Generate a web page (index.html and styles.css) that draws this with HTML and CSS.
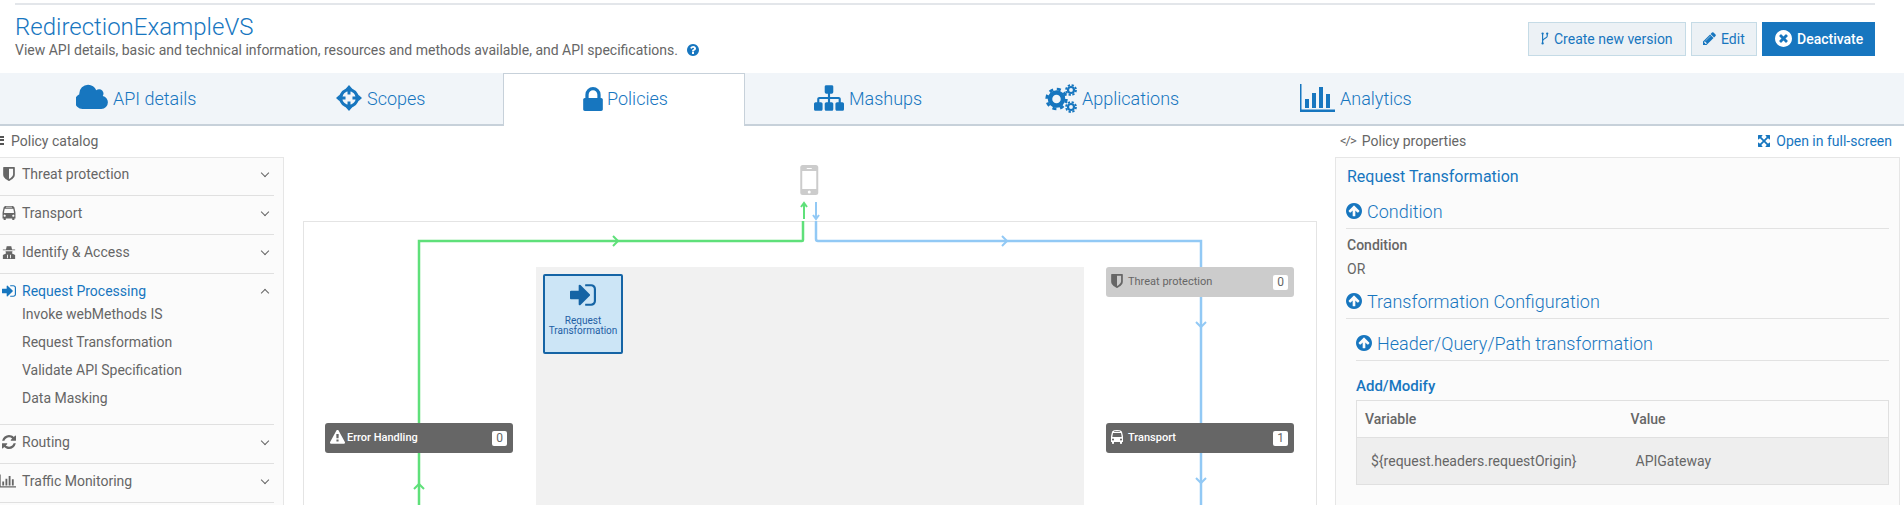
FILE: index.html
```html
<!DOCTYPE html>
<html lang="en">
<head>
<meta charset="utf-8">
<title>RedirectionExampleVS</title>
<link rel="stylesheet" href="styles.css">
</head>
<body>
<svg class="defs" width="0" height="0" aria-hidden="true">
  <symbol id="i-cloud" viewBox="0 0 1920 1792"><path d="M1856 1120q0 159-112.5 271.5t-271.5 112.5h-1088q-185 0-316.5-131.5t-131.5-316.5q0-132 71-241.5t187-163.5q-2-28-2-43 0-212 150-362t362-150q158 0 286.5 88t187.5 230q70-62 166-62 106 0 181 75t75 181q0 75-41 138 129 30 213 134.5t84 238.5z"/></symbol>
  <symbol id="i-lock" viewBox="256 128 1280 1408"><path d="M640 768h512v-192q0-106-75-181t-181-75-181 75-75 181v192zm832 96v576q0 40-28 68t-68 28h-960q-40 0-68-28t-28-68v-576q0-40 28-68t68-28h32v-192q0-184 132-316t316-132 316 132 132 316v192h32q40 0 68 28t28 68z"/></symbol>
  <symbol id="i-sitemap" viewBox="0 128 1792 1536"><path d="M1792 1248v320q0 40-28 68t-68 28h-320q-40 0-68-28t-28-68v-320q0-40 28-68t68-28h96v-192h-512v192h96q40 0 68 28t28 68v320q0 40-28 68t-68 28h-320q-40 0-68-28t-28-68v-320q0-40 28-68t68-28h96v-192h-512v192h96q40 0 68 28t28 68v320q0 40-28 68t-68 28h-320q-40 0-68-28t-28-68v-320q0-40 28-68t68-28h96v-192q0-52 38-90t90-38h512v-192h-96q-40 0-68-28t-28-68v-320q0-40 28-68t68-28h320q40 0 68 28t28 68v320q0 40-28 68t-68 28h-96v192h512q52 0 90 38t38 90v192h96q40 0 68 28t28 68z"/></symbol>
  <symbol id="i-signin" viewBox="0 128 1536 1536"><path d="M1184 896q0 26-19 45l-544 544q-19 19-45 19t-45-19-19-45v-288h-448q-26 0-45-19t-19-45v-384q0-26 19-45t45-19h448v-288q0-26 19-45t45-19 45 19l544 544q19 19 19 45zm352-352v704q0 119-84.5 203.5t-203.5 84.5h-320q-13 0-22.5-9.5t-9.5-22.5q0-4-1-20t-.5-26.5 3-23.5 10-19.5 20.5-6.5h320q66 0 113-47t47-113v-704q0-66-47-113t-113-47h-312l-11.5-1-11.5-3-8-5.5-7-9-2-13.5q0-4-1-20t-.5-26.5 3-23.5 10-19.5 20.5-6.5h320q119 0 203.5 84.5t84.5 203.5z"/></symbol>
  <symbol id="i-warning" viewBox="0 64 1792 1600"><path d="M1024 1375v-190q0-14-9.5-23.5t-22.5-9.5h-192q-13 0-22.5 9.5t-9.5 23.5v190q0 14 9.5 23.5t22.5 9.5h192q13 0 22.5-9.5t9.5-23.5zm-2-374l18-459q0-12-10-19-13-11-24-11h-220q-11 0-24 11-10 7-10 21l17 457q0 10 10 16.5t24 6.5h185q14 0 23.5-6.5t10.5-16.5zm-14-934l768 1408q35 63-2 126-17 29-46.5 46t-63.5 17h-1536q-34 0-63.5-17t-46.5-46q-37-63-2-126l768-1408q17-31 47-49t65-18 65 18 47 49z"/></symbol>
  <symbol id="i-shield" viewBox="256 128 1280 1536"><path d="M1344 960v-640h-448v1137q119-63 213-137 235-184 235-360zm192-768v768q0 86-33.5 170.5t-83 150-118 127.5-126.5 103-121 77.5-89.5 49.5-42.5 20q-12 6-26 6t-26-6q-16-7-42.5-20t-89.5-49.5-121-77.5-126.5-103-118-127.5-83-150-33.5-170.5v-768q0-26 19-45t45-19h1152q26 0 45 19t19 45z"/></symbol>
  <symbol id="i-bus" viewBox="128 64 1536 1664"><path d="M512 1216q0-53-37.5-90.5t-90.5-37.5-90.5 37.5-37.5 90.5 37.5 90.5 90.5 37.5 90.5-37.5 37.5-90.5zm1024 0q0-53-37.5-90.5t-90.5-37.5-90.5 37.5-37.5 90.5 37.5 90.5 90.5 37.5 90.5-37.5 37.5-90.5zm-46-396l-72-384q-5-23-22.5-37.5t-40.5-14.5h-918q-23 0-40.5 14.5t-22.5 37.5l-72 384q-5 30 14 53t49 23h1062q30 0 49-23t14-53zm-226-612q0-20-14-34t-34-14h-640q-20 0-34 14t-14 34 14 34 34 14h640q20 0 34-14t14-34zm400 725v603h-128v128q0 53-37.5 90.5t-90.5 37.5-90.5-37.5-37.5-90.5v-128h-768v128q0 53-37.5 90.5t-90.5 37.5-90.5-37.5-37.5-90.5v-128h-128v-603q0-112 25-223l103-454q9-78 97.5-137t230-89 312.5-30 312.5 30 230 89 97.5 137l105 454q26 112 26 223z"/></symbol>
  <symbol id="i-refresh" viewBox="128 128 1536 1536"><path d="M1639 1056q0 5-1 7-64 268-268 434.5t-478 166.5q-146 0-282.5-55t-243.5-157l-129 129q-19 19-45 19t-45-19-19-45v-448q0-26 19-45t45-19h448q26 0 45 19t19 45-19 45l-137 137q71 66 161 102t187 36q134 0 250-65t186-179q11-17 53-117 8-23 30-23h192q13 0 22.5 9.5t9.5 22.5zm25-800v448q0 26-19 45t-45 19h-448q-26 0-45-19t-19-45 19-45l138-138q-148-137-349-137-134 0-250 65t-186 179q-11 17-53 117-8 23-30 23h-199q-13 0-22.5-9.5t-9.5-22.5v-7q65-268 270-434.5t480-166.5q146 0 284 55.5t245 156.5l130-129q19-19 45-19t45 19 19 45z"/></symbol>
  <symbol id="i-up" viewBox="128 128 1536 1536"><path d="M1412 895q0-27-18-45l-362-362-91-91q-18-18-45-18t-45 18l-91 91-362 362q-18 18-18 45t18 45l91 91q18 18 45 18t45-18l189-189v502q0 26 19 45t45 19h128q26 0 45-19t19-45v-502l189 189q19 19 45 19t45-19l91-91q18-18 18-45zm252 1q0 209-103 385.5t-279.5 279.5-385.5 103-385.5-103-279.5-279.5-103-385.5 103-385.5 279.5-279.5 385.5-103 385.5 103 279.5 279.5 103 385.5z"/></symbol>
  <symbol id="i-help" viewBox="128 128 1536 1536"><path d="M1024 1376v-192q0-14-9-23t-23-9h-192q-14 0-23 9t-9 23v192q0 14 9 23t23 9h192q14 0 23-9t9-23zm256-672q0-88-55.5-163t-138.5-116-170-41q-243 0-371 213-15 24 8 42l132 100q7 6 19 6 16 0 25-12 53-68 86-92 34-24 86-24 48 0 85.5 26t37.5 59q0 38-20 61t-68 45q-63 28-115.5 86.5t-52.5 125.5v36q0 14 9 23t23 9h192q14 0 23-9t9-23q0-19 21.5-49.5t54.5-49.5q32-18 49-28.5t46-35 44.5-48 28-60.5 12.5-81zm384 192q0 209-103 385.5t-279.5 279.5-385.5 103-385.5-103-279.5-279.5-103-385.5 103-385.5 279.5-279.5 385.5-103 385.5 103 279.5 279.5 103 385.5z"/></symbol>
  <symbol id="i-close" viewBox="128 128 1536 1536"><path d="M1277 1122q0-26-19-45l-181-181 181-181q19-19 19-45 0-27-19-46l-90-90q-19-19-46-19-26 0-45 19l-181 181-181-181q-19-19-45-19-27 0-46 19l-90 90q-19 19-19 46 0 26 19 45l181 181-181 181q-19 19-19 45 0 27 19 46l90 90q19 19 46 19 26 0 45-19l181-181 181 181q19 19 45 19 27 0 46-19l90-90q19-19 19-46zm387-226q0 209-103 385.500t-279.500 279.500-385.500 103-385.500-103-279.500-279.500-103-385.500 103-385.500 279.500-279.500 385.500-103 385.500 103 279.500 279.500 103 385.500z"/></symbol>
  <symbol id="i-pencil" viewBox="128 128 1536 1536"><path d="M491 1536l91-91-235-235-91 91v107h128v128h107zm523-928q0-22-22-22-10 0-17 7l-542 542q-7 7-7 17 0 22 22 22 10 0 17-7l542-542q7-7 7-17zm-54-192l416 416-832 832h-416v-416zm683 96q0 53-37 90l-166 166-416-416 166-165q36-38 90-38 53 0 91 38l235 234q37 39 37 91z"/></symbol>
  <symbol id="i-expand" viewBox="128 128 1536 1536"><path d="M1411 541l-355 355 355 355 144-144q29-31 70-14 39 17 39 59v448q0 26-19 45t-45 19h-448q-42 0-59-40-17-39 14-69l144-144-355-355-355 355 144 144q31 30 14 69-17 40-59 40h-448q-26 0-45-19t-19-45v-448q0-42 40-59 39-17 69 14l144 144 355-355-355-355-144 144q-19 19-45 19-12 0-24-5-40-17-40-59v-448q0-26 19-45t45-19h448q42 0 59 40 17 39-14 69l-144 144 355 355 355-355-144-144q-31-30-14-69 17-40 59-40h448q26 0 45 19t19 45v448q0 42-39 59-13 5-25 5-26 0-45-19z"/></symbol>
  <symbol id="i-scopes" viewBox="0 0 30 30"><circle cx="15" cy="15" r="9.500" fill="none" stroke="currentColor" stroke-width="3.500"/><path d="M15 0l4 4.500h-2.300V11h-3.400V4.500H11zM15 30l-4-4.500h2.300V19h3.400v6.500H19zM0 15l4.500-4v2.300H11v3.400H4.500V19zM30 15l-4.500 4v-2.300H19v-3.400h6.500V11z"/></symbol>
  <symbol id="i-gears" viewBox="0 0 32 29"><circle cx="11.500" cy="15" r="6.500" fill="none" stroke="currentColor" stroke-width="4.500"/><circle cx="11.500" cy="15" r="9.800" fill="none" stroke="currentColor" stroke-width="2.800" stroke-dasharray="4 3.700"/><circle cx="26" cy="6" r="3" fill="none" stroke="currentColor" stroke-width="2.200"/><circle cx="26" cy="6" r="5" fill="none" stroke="currentColor" stroke-width="1.800" stroke-dasharray="2.300 1.630"/><circle cx="26" cy="23" r="3" fill="none" stroke="currentColor" stroke-width="2.200"/><circle cx="26" cy="23" r="5" fill="none" stroke="currentColor" stroke-width="1.800" stroke-dasharray="2.300 1.630"/></symbol>
  <symbol id="i-chart" viewBox="0 0 35 28"><path d="M0 0h1.500v25.500H35V28H0z"/><path d="M5 15h4v9H5zM12 9h4v15h-4zM19 3h4v21h-4zM26 10h4v14h-4z"/></symbol>
  <symbol id="i-fork" viewBox="0 0 9 14"><path d="M1.800 1v12M7 1v3.500C7 6.500 2.500 7 1.800 9.500" fill="none" stroke="currentColor" stroke-width="1.300"/><circle cx="1.800" cy="1.500" r="1.300"/><circle cx="7" cy="1.500" r="1.300"/><circle cx="1.800" cy="12.500" r="1.300"/></symbol>
  <symbol id="i-secret" viewBox="0 0 14 16"><path d="M3.500 5L4.500 1c1 .6 1.500.6 2.500.2 1 .4 1.500.4 2.500-.2l1 4H14v1H0V5z"/><path d="M3 7h8l-.5 2.500H10l4 2V16H0v-4.500l4-2h-.5zM4.800 11v4h1v-4zM8.200 11v4h1v-4z"/></symbol>
</svg>

<div class="page">
  <div class="rule-top"></div>

  <header class="head">
    <div class="head-text">
      <h1 class="title">RedirectionExampleVS</h1>
      <p class="subtitle">View API details, basic and technical information, resources and methods available, and API specifications.<svg class="ico help"><use href="#i-help"/></svg></p>
    </div>
    <div class="actions">
      <button class="btn btn-create"><svg class="ico fork"><use href="#i-fork"/></svg>Create new version</button>
      <button class="btn btn-edit"><svg class="ico pencil"><use href="#i-pencil"/></svg>Edit</button>
      <button class="btn btn-primary"><svg class="ico times"><use href="#i-close"/></svg>Deactivate</button>
    </div>
  </header>

  <nav class="tabs">
    <a class="tab tab-details"><svg class="ico t-cloud"><use href="#i-cloud"/></svg>API details</a>
    <a class="tab tab-scopes"><svg class="ico t-scopes"><use href="#i-scopes"/></svg>Scopes</a>
    <a class="tab tab-policies active"><svg class="ico t-lock"><use href="#i-lock"/></svg>Policies</a>
    <a class="tab tab-mashups"><svg class="ico t-map"><use href="#i-sitemap"/></svg>Mashups</a>
    <a class="tab tab-apps"><svg class="ico t-gears"><use href="#i-gears"/></svg>Applications</a>
    <a class="tab tab-analytics"><svg class="ico t-chart"><use href="#i-chart"/></svg>Analytics</a>
  </nav>

  <main class="body">
    <aside class="catalog">
      <div class="pane-title catalog-title"><span class="bars"></span>Policy catalog</div>
      <div class="catalog-box">
        <section class="group"><div class="group-head"><svg class="ico g-ico"><use href="#i-shield"/></svg><span>Threat protection</span><i class="chev"></i></div></section>
        <section class="group"><div class="group-head"><svg class="ico g-ico"><use href="#i-bus"/></svg><span>Transport</span><i class="chev"></i></div></section>
        <section class="group"><div class="group-head"><svg class="ico g-ico"><use href="#i-secret"/></svg><span>Identify &amp; Access</span><i class="chev"></i></div></section>
        <section class="group open">
          <div class="group-head"><svg class="ico g-ico"><use href="#i-signin"/></svg><span>Request Processing</span><i class="chev up"></i></div>
          <ul class="items">
            <li>Invoke webMethods IS</li>
            <li>Request Transformation</li>
            <li>Validate API Specification</li>
            <li>Data Masking</li>
          </ul>
        </section>
        <section class="group"><div class="group-head"><svg class="ico g-ico"><use href="#i-refresh"/></svg><span>Routing</span><i class="chev"></i></div></section>
        <section class="group"><div class="group-head"><svg class="ico g-ico g-chart"><use href="#i-chart"/></svg><span>Traffic Monitoring</span><i class="chev"></i></div></section>
      </div>
    </aside>

    <section class="flow">
      <svg class="phone" viewBox="0 0 18 30"><rect width="18" height="30" rx="2.500" fill="#ccc"/><rect x="2" y="6" width="14" height="18" fill="#fff"/><rect x="6.500" y="3" width="5" height="1" fill="#fff"/><circle cx="9" cy="27" r="1.500" fill="#fff"/></svg>
      <svg class="stub" width="40" height="22" viewBox="0 0 40 22" fill="none" stroke-width="2">
        <path d="M13 19V3M10 7l3-4 3 4" stroke="#5fe07a"/>
        <path d="M25 2v17M22 15l3 4 3-4" stroke="#92c9f5"/>
      </svg>
      <div class="canvas">
        <div class="stage"></div>
        <svg class="wires" width="1012" height="283" viewBox="0 0 1012 283" fill="none" stroke-width="2.500">
          <path d="M499 -1V18q0 1-1 1H115V283" stroke="#5fe07a"/>
          <path d="M512 -1V17q0 2 2 2H897V283" stroke="#92c9f5"/>
          <path d="M309 14l5 5-5 5M110 267l5-5 5 5" stroke="#5fe07a" stroke-width="2"/>
          <path d="M698 14l5 5-5 5M892 100l5 5 5-5M892 256l5 5 5-5" stroke="#92c9f5" stroke-width="2"/>
        </svg>
        <div class="node node-selected">
          <svg class="ico n-ico"><use href="#i-signin"/></svg>
          <span>Request Transformation</span>
        </div>
        <div class="stepbar bar-error dark"><svg class="ico s-ico"><use href="#i-warning"/></svg><span>Error Handling</span><b>0</b></div>
        <div class="stepbar bar-threat"><svg class="ico s-ico"><use href="#i-shield"/></svg><span>Threat protection</span><b>0</b></div>
        <div class="stepbar bar-transport dark"><svg class="ico s-ico"><use href="#i-bus"/></svg><span>Transport</span><b>1</b></div>
      </div>
    </section>

    <aside class="props">
      <div class="pane-title props-title">
        <span class="code">&lt;/&gt;</span>Policy properties
        <a class="full"><svg class="ico full-ico"><use href="#i-expand"/></svg>Open in full-screen</a>
      </div>
      <div class="props-box">
        <h2 class="props-name">Request Transformation</h2>
        <h3 class="sec"><svg class="ico"><use href="#i-up"/></svg>Condition</h3>
        <div class="label">Condition</div>
        <div class="val">OR</div>
        <h3 class="sec"><svg class="ico"><use href="#i-up"/></svg>Transformation Configuration</h3>
        <div class="nested">
          <h3 class="sec"><svg class="ico"><use href="#i-up"/></svg>Header/Query/Path transformation</h3>
          <div class="sub">Add/Modify</div>
          <table class="grid">
            <thead><tr><th>Variable</th><th>Value</th></tr></thead>
            <tbody><tr><td>${request.headers.requestOrigin}</td><td>APIGateway</td></tr></tbody>
          </table>
        </div>
      </div>
    </aside>
  </main>
</div>
</body>
</html>
```

FILE: styles.css
```css
* { box-sizing: border-box; }
html, body { margin: 0; padding: 0; background: #fff; }
body { font-family: Roboto, "Liberation Sans", sans-serif; color: #666; overflow: hidden; }
.defs { position: absolute; }
.page { width: 1904px; height: 505px; overflow: hidden; }
.ico { display: inline-block; fill: currentColor; flex: none; }

.rule-top { height: 2px; margin: 3px 29px 0 15px; background: #e3e6ea; }

.head { display: flex; justify-content: space-between; height: 68px; padding: 0 29px 0 15px; }
.title { margin: 8px 0 0; font-size: 24px; line-height: 28px; font-weight: 300; color: #1776bf; }
.subtitle { margin: 0; font-size: 14px; line-height: 18px; color: #666; display: flex; align-items: center; }
.help { width: 12px; height: 12px; margin-left: 9px; color: #1776bf; }
.actions { display: flex; gap: 5px; margin-top: 17px; height: 34px; }
.btn { display: flex; align-items: center; height: 34px; font: 400 14px Roboto, sans-serif; cursor: pointer; }
.btn-create, .btn-edit { background: #ecf1f5; border: 1px solid #c5dbe6; color: #1776bf; padding: 0 0 1px 12px; }
.btn-create { width: 158px; }
.btn-edit { width: 66px; padding-left: 11px; }
.btn-primary { width: 113px; padding: 0 0 1px 13px; background: #1776bf; border: 0; color: #fff; font-weight: 500; }
.fork { width: 8px; height: 13px; margin-right: 5px; }
.pencil { width: 13px; height: 13px; margin-right: 5px; }
.times { width: 17px; height: 17px; margin-right: 5px; }

.tabs { position: relative; display: block; height: 53px; background: #f1f5f9; border-bottom: 2px solid #c7d1da; }
.tab { position: absolute; top: 0; height: 50px; display: flex; align-items: center; font-size: 18px; font-weight: 300; color: #1776bf; }
.tab svg { color: #1776bf; margin-right: 5px; }
.tab-details { left: 76px; }
.tab-scopes { left: 336px; }
.tab-policies { left: 503px; width: 242px; height: 53px; padding: 0 0 3px 78px; background: #fff; border: 1px solid #c7d1da; border-bottom: 0; }
.tab-mashups { left: 814px; }
.tab-apps { left: 1045px; }
.tab-analytics { left: 1300px; }
.tab .t-cloud { width: 33px; height: 31px; margin-right: 4px; }
.t-scopes { width: 26px; height: 26px; }
.tab .t-lock { width: 22px; height: 24px; margin-right: 3px; }
.t-map { width: 30px; height: 26px; }
.t-gears { width: 32px; height: 29px; }
.t-chart { width: 35px; height: 28px; }

.body { display: flex; height: 379px; }
.pane-title { display: flex; align-items: center; height: 31px; padding-bottom: 2px; font-size: 14px; color: #666; }

.catalog { flex: none; width: 284px; }
.catalog-title { padding-left: 11px; position: relative; }
.bars { position: absolute; left: 0; top: 10px; width: 4px; height: 9px; background: repeating-linear-gradient(#555 0 2px, transparent 2px 3.500px); }
.catalog-box { height: 360px; background: #fbfbfb; border: 1px solid #e6e6e6; border-left: 0; padding-right: 9px; }
.group { border-bottom: 1px solid #e0e0e0; }
.group-head { display: flex; align-items: center; height: 38px; padding: 0 4px 4px 2px; font-size: 14px; color: #666; }
.group:first-child .group-head { height: 37px; padding-bottom: 5px; }
.group-head span { flex: 1; margin-left: 6px; }
.g-ico { width: 14px; height: 14px; color: #666; }
.g-chart { margin-left: -2px; width: 16px; }
.open .group-head { color: #1776bf; }
.open .g-ico { color: #1776bf; }
.chev { width: 6px; height: 6px; margin: -3px 2px 0 0; border-right: 1px solid #666; border-bottom: 1px solid #666; transform: rotate(45deg); }
.chev.up { margin-top: 3px; transform: rotate(225deg); }
.items { list-style: none; margin: -12px 0 0; padding: 0 0 12px 22px; font-size: 14px; color: #666; }
.items li { height: 28px; line-height: 28px; }

.flow { position: relative; flex: none; width: 1051px; }
.phone { position: absolute; left: 516px; top: 39px; width: 18.500px; height: 30px; }
.stub { position: absolute; left: 507px; top: 74px; }
.canvas { position: absolute; left: 19px; top: 95px; width: 1014px; height: 300px; border: 1px solid #e4e4e4; border-bottom: 0; }
.stage { position: absolute; left: 232px; top: 45px; width: 548px; height: 260px; background: #f1f1f1; }
.wires { position: absolute; left: 0; top: 0; overflow: visible; }
.node { position: absolute; left: 239px; top: 52px; width: 80px; height: 80px; background: #cce5f6; border: 2px solid #1564a5; border-radius: 2px; display: flex; flex-direction: column; align-items: center; color: #1f5fa5; }
.n-ico { width: 26px; height: 26px; margin-top: 6px; color: #1564a5; }
.node span { margin-top: 8px; padding: 0 4px; font-size: 10px; line-height: 10px; text-align: center; }
.stepbar { position: absolute; width: 188px; height: 30px; padding: 0 6px 0 5px; display: flex; align-items: center; border-radius: 3px; background: #ccc; color: #666; font-size: 11px; }
.stepbar span { flex: 1; margin: -2px 0 0 5px; }
.stepbar b { width: 15px; height: 15px; background: #fff; border-radius: 2px; font-size: 12px; font-weight: 400; line-height: 15px; text-align: center; color: #666; }
.stepbar.dark { background: #666; color: #fff; font-weight: 500; }
.s-ico { width: 12px; height: 14px; margin-top: -2px; }
.bar-error { left: 21px; top: 201px; }
.bar-error .s-ico { width: 15px; }
.bar-error span { margin-left: 2px; }
.bar-threat { left: 802px; top: 45px; }
.bar-transport { left: 802px; top: 201px; }

.props { flex: 1; padding-right: 4px; }
.props-title { padding-left: 5px; position: relative; }
.code { font-size: 13px; letter-spacing: -1px; margin-right: 6px; }
.full { margin-left: auto; margin-right: 8px; color: #1776bf; display: flex; align-items: center; }
.full-ico { width: 12px; height: 12px; margin-right: 6px; color: #1776bf; }
.props-box { height: 360px; background: #fbfbfb; border: 1px solid #e6e6e6; padding: 9px 10px 0 10px; }
.props-name { margin: 0 0 0 1px; font-size: 16px; line-height: 20px; font-weight: 400; color: #1776bf; }
.sec { display: flex; align-items: center; margin: 0; height: 37px; padding-top: 2px; font-size: 18px; font-weight: 300; color: #1776bf; border-bottom: 1px solid #e2e2e2; }
.props-name + .sec { margin-top: 5px; }
.sec svg { width: 16px; height: 16px; margin-right: 5px; }
.label { margin: 8px 0 0 1px; font-size: 14px; line-height: 16px; font-weight: 500; color: #666; }
.val { margin: 8px 0 0 1px; font-size: 14px; line-height: 16px; color: #666; }
.label + .val + .sec { margin-top: 5px; }
.nested { margin-left: 10px; padding-top: 5px; }
.sub { margin-top: 16px; font-size: 15px; line-height: 18px; font-weight: 500; color: #1776bf; }
.grid { width: 100%; margin-top: 5px; border-collapse: collapse; border: 1px solid #e0e0e0; font-size: 14px; table-layout: fixed; }
.grid th { height: 37px; padding: 0 0 0 9px; text-align: left; font-weight: 500; color: #666; }
.grid th:first-child { width: 265px; padding-left: 8px; }
.grid td { height: 47px; padding: 0 0 0 14px; background: #eee; color: #666; border-top: 1px solid #e0e0e0; }
```
